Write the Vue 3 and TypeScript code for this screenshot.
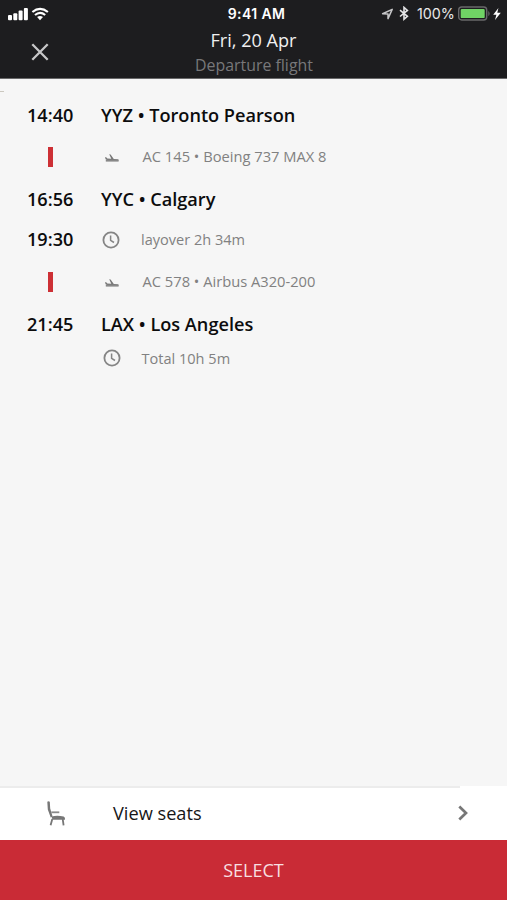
<script setup lang="ts">
type RowKind = 'stop' | 'flight' | 'layover' | 'total'

interface ItineraryRow {
  kind: RowKind
  time?: string
  label: string
  size: number
}

const rows: ItineraryRow[] = [
  { kind: 'stop', time: '14:40', label: 'YYZ • Toronto Pearson', size: 42 },
  { kind: 'flight', label: 'AC 145 • Boeing 737 MAX 8', size: 42 },
  { kind: 'stop', time: '16:56', label: 'YYC • Calgary', size: 43 },
  { kind: 'layover', time: '19:30', label: 'layover 2h 34m', size: 38 },
  { kind: 'flight', label: 'AC 578 • Airbus A320-200', size: 45 },
  { kind: 'stop', time: '21:45', label: 'LAX • Los Angeles', size: 41 },
  { kind: 'total', label: 'Total 10h 5m', size: 27 },
]
</script>

<template>
  <div class="screen">
    <header class="top">
      <div class="status">
        <div class="status-left">
          <svg width="42" height="16" viewBox="0 0 42 16">
            <g fill="#fff">
              <rect x="0" y="9" width="4" height="5.3" rx="1" />
              <rect x="5.3" y="7.2" width="4" height="7.1" rx="1" />
              <rect x="10.6" y="4.6" width="4" height="9.7" rx="1" />
              <rect x="15.9" y="2" width="4" height="12.3" rx="1" />
            </g>
            <g fill="none" stroke="#fff" stroke-width="2.1">
              <path d="M24.4 6Q32 -.4 39.9 6" />
              <path d="M27 9Q32 4.6 37.2 9" />
            </g>
            <path d="M29.1 11Q32 8.8 35 11L32 14.2Z" fill="#fff" />
          </svg>
        </div>
        <span class="clock">9:41 AM</span>
        <div class="status-right">
          <svg class="locate" width="13" height="12" viewBox="0 0 13 12">
            <path d="M1.6 5.7L11.2 1.4L7 10.6V6Z" fill="none" stroke="#c6c6c8" stroke-width="1.5" stroke-linejoin="round" />
          </svg>
          <svg class="bluetooth" width="10" height="15" viewBox="0 0 10 15">
            <path d="M1 4.2L8.4 10.3L5 13.2V1.4L8.4 4.4L1 10.5" fill="none" stroke="#e4e4e5" stroke-width="1.6" />
          </svg>
          <span class="percent">100%</span>
          <svg class="battery" width="33" height="16" viewBox="0 0 33 16">
            <rect x=".7" y="1" width="28" height="13" rx="3" fill="none" stroke="#68686a" stroke-width="1.4" />
            <rect x="2.7" y="2.9" width="24" height="9.2" rx="1.2" fill="#70d365" />
            <path d="M30.3 4.7Q33 7.5 30.3 10.3Z" fill="#68686a" />
          </svg>
          <svg class="bolt" width="8" height="12" viewBox="0 0 8 12">
            <path d="M5.4 0L.2 6.7H3.4L2 12L7.8 4.8H4.3Z" fill="#fff" />
          </svg>
        </div>
      </div>
      <div class="title-bar">
        <button class="close" aria-label="Close">
          <svg width="18" height="18" viewBox="0 0 18 18">
            <path d="M1.3 1.3L16.7 16.7M16.7 1.3L1.3 16.7" stroke="#c7c7c8" stroke-width="2.3" />
          </svg>
        </button>
        <div class="titles">
          <h1><span>Fri, 20 Apr</span></h1>
          <p>Departure flight</p>
        </div>
      </div>
    </header>

    <main class="itinerary">
      <span class="edge-mark"></span>
      <div v-for="row in rows" :key="row.label" class="row" :class="row.kind" :style="{ height: row.size + 'px' }">
        <div class="time-cell">
          <span v-if="row.time" class="time">{{ row.time }}</span>
          <span v-else-if="row.kind === 'flight'" class="leg"></span>
        </div>
        <div v-if="row.kind !== 'stop'" class="icon-cell">
          <svg v-if="row.kind === 'flight'" class="plane" width="14" height="8" viewBox="0 0 14 8">
            <path d="M.2 3.1L1.2 3.3L2.3 4.4L6.3 4.8L4.2 .2L5.6 .4L8.8 5L12.6 5.2Q14 5.5 13.7 6.4L2.2 5.9Q.6 5.7 .4 4.8Z" fill="#777" />
            <rect x=".8" y="5.7" width="12.8" height="1.9" fill="#888" />
          </svg>
          <svg v-else width="18" height="18" viewBox="0 0 18 18">
            <circle cx="9" cy="9" r="7.6" fill="none" stroke="#858585" stroke-width="1.8" />
            <path d="M8.6 4.5V9.3L12 11.5" fill="none" stroke="#858585" stroke-width="1.5" />
          </svg>
        </div>
        <span class="label">{{ row.label }}</span>
      </div>
    </main>

    <button class="seats">
      <span class="divider"></span>
      <svg class="seat" width="20" height="26" viewBox="0 0 20 26">
        <path d="M.3 .8Q1.4 -.2 2.8 .8L3.2 7.6L5.6 15.5L3.7 16.4L.8 8.5Z" fill="#777" />
        <path d="M4.3 11.3H12.3" stroke="#8a8a8a" stroke-width="1.8" />
        <path d="M4.5 15.4Q10 14.3 16.6 15.4Q18.5 16 18 18.8H5.6Z" fill="#777" />
        <path d="M5.3 18L3.6 24.3M15.7 18L16.6 24.3" stroke="#777" stroke-width="1.8" />
      </svg>
      <span class="seats-label">View seats</span>
      <svg class="chevron" width="10" height="16" viewBox="0 0 10 16">
        <path d="M1.3 1.5L8 8L1.3 14.5" fill="none" stroke="#777" stroke-width="2.7" />
      </svg>
    </button>
    <button class="select"><span>SELECT</span></button>
  </div>
</template>

<style>
body {
  margin: 0;
}
</style>

<style scoped>
.screen {
  width: 507px;
  height: 900px;
  display: flex;
  flex-direction: column;
  overflow: hidden;
  background: #f6f6f6;
  color: #0c0c0d;
  font-family: "Open Sans", "Noto Sans", sans-serif;
}
button {
  margin: 0;
  padding: 0;
  border: 0;
  background: none;
  font-family: inherit;
}
svg {
  display: block;
  flex: none;
}
.top {
  height: 79px;
  flex: none;
  box-sizing: border-box;
  background: #1d1d1f;
  border-bottom: 1px solid #69696a;
}
.status {
  height: 27px;
  display: grid;
  grid-template-columns: 1fr auto 1fr;
  align-items: center;
  color: #fff;
  font-family: Inter, "Liberation Sans", sans-serif;
}
.status-left {
  padding-left: 8px;
}
.clock {
  font-size: 14px;
  font-weight: 600;
  letter-spacing: 0.4px;
  line-height: 27px;
  padding-left: 6px;
}
.status-right {
  display: flex;
  align-items: center;
  justify-content: flex-end;
  padding-right: 6px;
}
.locate {
  margin-right: 5px;
}
.bluetooth {
  margin-right: 8px;
}
.percent {
  width: 37px;
  margin-right: 4px;
  color: #e8e8e9;
  font-size: 14.3px;
  white-space: nowrap;
}
.bolt {
  margin-left: 2px;
}
.title-bar {
  height: 51px;
  display: grid;
  grid-template-columns: 80px 1fr 80px;
}
.close {
  height: 49px;
  display: flex;
  align-items: center;
  justify-content: center;
}
.titles {
  text-align: center;
}
h1,
p {
  margin: 0;
  font-weight: 400;
}
h1 {
  height: 26px;
  color: #f0f0f0;
  font-size: 18.1px;
  line-height: 26px;
}
p {
  height: 24px;
  padding-left: 1px;
  color: #78787a;
  font-size: 15.9px;
  line-height: 25px;
}
.itinerary {
  flex: 1;
  position: relative;
  padding-top: 15px;
}
.edge-mark {
  position: absolute;
  left: 0;
  top: 12px;
  width: 4px;
  height: 1px;
  background: #cbc8bf;
}
.row {
  display: flex;
  align-items: center;
  white-space: nowrap;
}
.time-cell {
  width: 101px;
  display: flex;
  padding-left: 27px;
  box-sizing: border-box;
}
.time {
  padding-bottom: 2px;
  font-size: 18.1px;
  font-weight: 600;
  line-height: 24px;
}
.leg {
  width: 5px;
  height: 20px;
  margin-left: 21px;
  background: #cd3035;
}
.icon-cell {
  width: 41.5px;
  display: flex;
  padding-left: 1px;
  box-sizing: border-box;
}
.plane {
  margin: 2px 0 0 3px;
}
.label {
  padding-bottom: 2px;
  color: #818181;
  font-size: 14.7px;
  line-height: 20px;
}
.layover .label,
.total .label {
  font-size: 14.55px;
}
.stop .label {
  color: #0c0c0d;
  font-size: 18.15px;
  font-weight: 600;
  line-height: 24px;
}
.stop:nth-child(2) .time,
.stop:nth-child(2) .label {
  padding-bottom: 0;
}
.layover .icon-cell {
  width: 40px;
  padding-left: 0.5px;
  padding-bottom: 1px;
}
.total .icon-cell {
  width: 40.5px;
  padding-left: 2px;
  padding-bottom: 1px;
}
.seats {
  position: relative;
  height: 54px;
  flex: none;
  display: flex;
  align-items: center;
  background: #fff;
  color: #161617;
  text-align: left;
}
.divider {
  position: absolute;
  left: 0;
  top: 0;
  width: 460px;
  height: 2px;
  background: #ececec;
}
.seat {
  margin: 2px 0 0 47px;
}
.seats-label {
  flex: 1;
  margin-left: 46px;
  font-size: 18.2px;
  line-height: 24px;
}
.chevron {
  margin-right: 39px;
}
.select {
  height: 60px;
  flex: none;
  background: #c92b36;
  color: #f8dfe1;
  font-size: 18px;
  line-height: 24px;
}
</style>
